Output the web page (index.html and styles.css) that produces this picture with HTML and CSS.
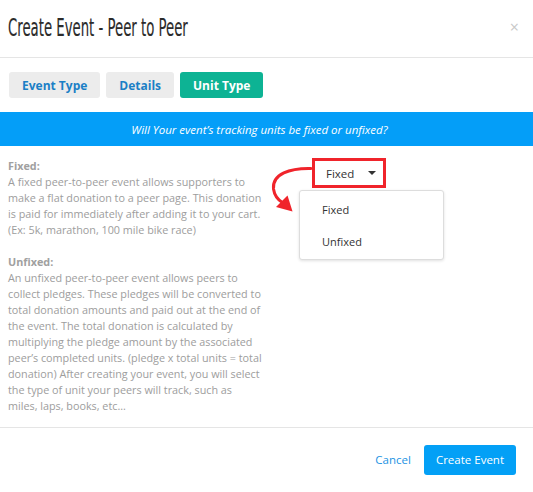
FILE: index.html
```html
<!DOCTYPE html>
<html>
<head>
<meta charset="utf-8">
<link rel="stylesheet" href="styles.css">
</head>
<body>
<div class="modal">
  <header class="modal-header">
    <h1 class="title"><span class="title-text">Create Event - Peer to Peer</span></h1>
    <span class="close">×</span>
  </header>
  <nav class="tabs">
    <span class="tab">Event Type</span>
    <span class="tab">Details</span>
    <span class="tab active">Unit Type</span>
  </nav>
  <div class="banner">Will Your event’s tracking units be fixed or unfixed?</div>
  <section class="content">
    <div class="info">
      <p><strong>Fixed:</strong><br>A fixed peer-to-peer event allows supporters to make a flat donation to a peer page. This donation is paid for immediately after adding it to your cart. (Ex: 5k, marathon, 100 mile bike race)</p>
      <p><strong>Unfixed:</strong><br>An unfixed peer-to-peer event allows peers to collect pledges. These pledges will be converted to total donation amounts and paid out at the end of the event. The total donation is calculated by multiplying the pledge amount by the associated peer’s completed units. (pledge x total units = total donation) After creating your event, you will select the type of unit your peers will track, such as miles, laps, books, etc...</p>
    </div>
    <div class="picker">
      <svg class="arrow" width="50" height="60" viewBox="265 160 50 60">
        <path d="M311 168.5 C 290 168, 272 174, 273.5 189 C 274.5 196, 278 200, 283 203" fill="none" stroke="#f0242b" stroke-width="3" stroke-linecap="round"/>
        <polygon points="276,207 292.5,211.5 287.5,195.5" fill="#f0242b"/>
      </svg>
      <div class="select-box">
        <span class="select-value">Fixed</span>
        <span class="caret"></span>
      </div>
      <ul class="menu">
        <li>Fixed</li>
        <li>Unfixed</li>
      </ul>
    </div>
  </section>
  <footer class="modal-footer">
    <span class="cancel">Cancel</span>
    <span class="btn-primary">Create Event</span>
  </footer>
</div>
</body>
</html>
```

FILE: styles.css
```css
* { box-sizing: border-box; }
html, body { margin: 0; padding: 0; background: #fff; }
body { font-family: "Open Sans", "Liberation Sans", sans-serif; color: #333; }

.modal { width: 533px; display: flex; flex-direction: column; }
.modal > * { flex-shrink: 0; }

.modal-header {
  height: 58px;
  border-bottom: 1px solid #e5e5e5;
  display: flex;
  align-items: center;
  justify-content: space-between;
  padding: 0 14px 0 8px;
}
.title {
  margin: 0;
  font-weight: normal;
  font-family: "Liberation Sans Narrow", "DejaVu Sans Condensed", "Liberation Sans", sans-serif;
  font-size: 25px;
  color: #2b2b2b;
  line-height: 1;
  padding-bottom: 2px;
}
.title-text { display: inline-block; transform: scaleX(0.59); transform-origin: left center; white-space: nowrap; -webkit-text-stroke: 0.15px #2b2b2b; }
.close { color: #c8c8c8; font-size: 16px; line-height: 1; margin-top: -4px; }

.tabs { display: flex; gap: 6px; padding: 14px 0 0 9px; }
.tab {
  height: 26px;
  padding: 0 13px;
  display: flex;
  align-items: center;
  background: #ececec;
  color: #1b7fc6;
  font-weight: 700;
  font-size: 12px;
  border-radius: 3px;
}
.tab.active { background: #0db394; color: #fff; padding: 0 13px; }

.banner {
  margin-top: 14px;
  height: 34px;
  background: #049ef8;
  color: #fff;
  font-style: italic;
  font-size: 11.5px;
  display: flex;
  align-items: center;
  justify-content: center;
  padding-right: 14px;
}

.content { height: 282px; display: flex; padding: 12px 0 0 8px; border-bottom: 1px solid #e5e5e5; }
.info { flex: 0 0 264px; width: 264px; padding-right: 10px; font-size: 10.8px; line-height: 16px; color: #9d9d9d; }
.info p { margin: 0 0 16px; }
.info strong { font-weight: 700; color: #a0a0a0; }

.picker { position: relative; flex: 1; }
.arrow { position: absolute; left: -7px; top: 2px; }
.select-box {
  position: absolute;
  left: 40px;
  top: 0;
  width: 74px;
  height: 30px;
  border: 3px solid #f0242b;
  display: flex;
  align-items: center;
  padding-left: 11px;
  font-size: 11.5px;
  color: #333;
}
.caret {
  margin-left: 14px;
  width: 0; height: 0;
  border-left: 4px solid transparent;
  border-right: 4px solid transparent;
  border-top: 4px solid #333;
}
.menu {
  position: absolute;
  left: 27px;
  top: 32px;
  width: 145px;
  margin: 0;
  padding: 2px 0;
  list-style: none;
  border: 1px solid #ddd;
  border-radius: 3px;
  box-shadow: 0 1px 3px rgba(0,0,0,0.12);
  background: #fff;
  font-size: 11px;
  color: #333;
}
.menu li { height: 32px; display: flex; align-items: center; padding-left: 22px; }

.modal-footer {
  height: 64px;
  display: flex;
  align-items: center;
  justify-content: flex-end;
  gap: 13px;
  padding: 0 17px 1px 0;
}
.cancel { color: #1c93e3; font-size: 11.5px; }
.btn-primary {
  height: 30px;
  padding: 0 12px;
  display: flex;
  align-items: center;
  background: #03a0f6;
  color: #fff;
  font-size: 11.5px;
  border-radius: 3px;
}
```
